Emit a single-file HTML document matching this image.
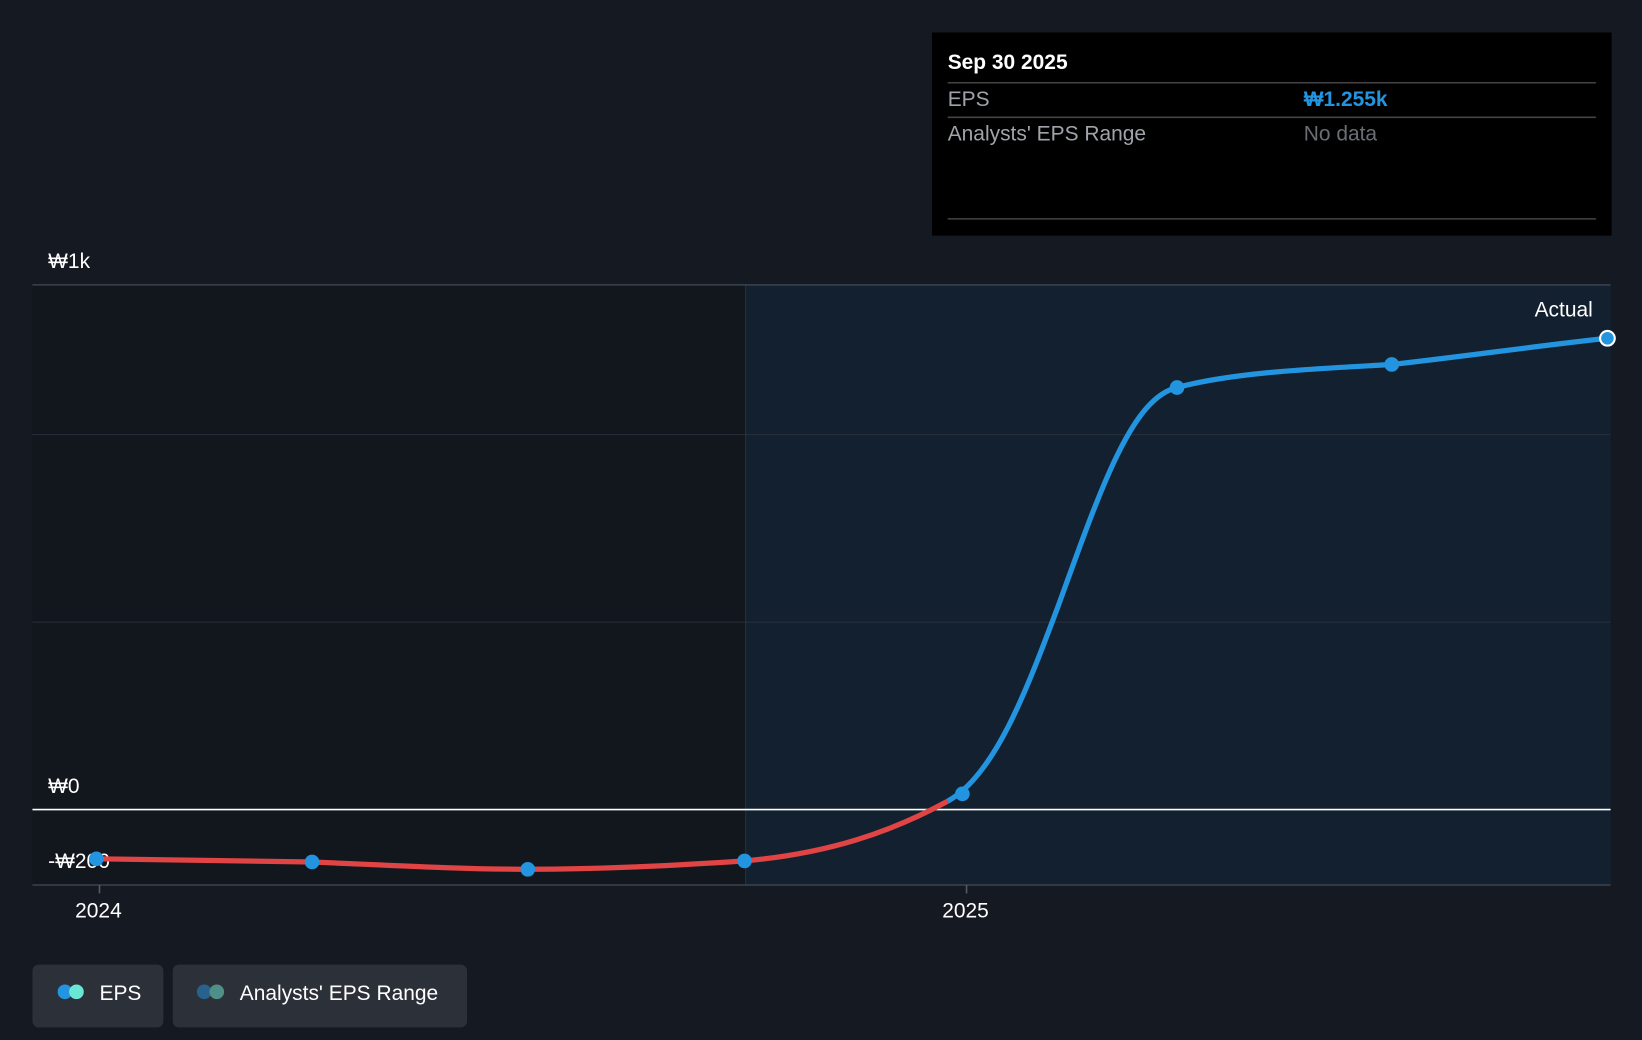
<!DOCTYPE html>
<html><head><meta charset="utf-8"><style>
html,body{margin:0;padding:0;background:#151b23;}
svg{display:block;}
text{font-family:"Liberation Sans",sans-serif;}
</style></head><body>
<svg width="1642" height="1040" viewBox="0 0 1568 993" preserveAspectRatio="none" xmlns="http://www.w3.org/2000/svg">
<rect width="1568" height="993" fill="#151a22"/>
<rect x="31" y="272" width="681" height="573" fill="#12161d"/>
<rect x="712" y="272" width="826" height="573" fill="#13202f"/>
<line x1="712" y1="272" x2="712" y2="845" stroke="#233140" stroke-width="1"/>
<line x1="31" y1="272" x2="1538" y2="272" stroke="#3a4250" stroke-width="1.5"/>
<line x1="31" y1="415" x2="1538" y2="415" stroke="#2a313c" stroke-width="1"/>
<line x1="31" y1="594" x2="1538" y2="594" stroke="#2a313c" stroke-width="1"/>
<line x1="31" y1="773" x2="1538" y2="773" stroke="#ffffff" stroke-width="1.5"/>
<line x1="31" y1="845" x2="1538" y2="845" stroke="#3d434d" stroke-width="1.5"/>
<line x1="95" y1="845" x2="95" y2="853" stroke="#555b64" stroke-width="1.5"/>
<line x1="923" y1="845" x2="923" y2="853" stroke="#555b64" stroke-width="1.5"/>
<text x="46" y="256" fill="#fff" font-size="20">₩1k</text>
<text x="46" y="757" fill="#fff" font-size="20">₩0</text>
<text x="46" y="829" fill="#fff" font-size="20">-₩200</text>
<text x="94" y="876" fill="#fff" font-size="20" text-anchor="middle">2024</text>
<text x="922" y="876" fill="#fff" font-size="20" text-anchor="middle">2025</text>
<text x="1521" y="302" fill="#fff" font-size="20" text-anchor="end">Actual</text>
<path d="M92,820 C160,821 230,822 298,823 C370,826 440,830 504,830 C580,830 650,826 711,822 C790,815 850,795 905,765" stroke="#e04444" stroke-width="5" fill="none"/>
<path d="M905,765 C950,740 980,660 1010,580 C1050,470 1080,380 1124,370 C1180,355 1260,352 1329,348 C1400,340 1470,330 1535,323" stroke="#2394e0" stroke-width="5" fill="none"/>
<g fill="#2394e0">
<circle cx="92" cy="820" r="7"/><circle cx="298" cy="823" r="7"/><circle cx="504" cy="830" r="7"/><circle cx="711" cy="822" r="7"/><circle cx="919" cy="758" r="7"/><circle cx="1124" cy="370" r="7"/><circle cx="1329" cy="348" r="7"/>
</g>
<circle cx="1535" cy="323" r="7" fill="#2394e0" stroke="#fff" stroke-width="2"/>
<rect x="890" y="31" width="649" height="194" fill="#000"/>
<text x="905" y="66" fill="#fff" font-size="20" font-weight="bold">Sep 30 2025</text>
<line x1="905" y1="79" x2="1524" y2="79" stroke="#444" stroke-width="1.5"/>
<text x="905" y="101" fill="#a0a4aa" font-size="20">EPS</text>
<text x="1245" y="101" fill="#2394e0" font-size="20" font-weight="bold">₩1.255k</text>
<line x1="905" y1="112" x2="1524" y2="112" stroke="#444" stroke-width="1.5"/>
<text x="905" y="134" fill="#a0a4aa" font-size="20">Analysts' EPS Range</text>
<text x="1245" y="134" fill="#6a6e74" font-size="20">No data</text>
<line x1="905" y1="209" x2="1524" y2="209" stroke="#444" stroke-width="1.5"/>
<rect x="31" y="921" width="125" height="60" rx="6" fill="#2c3038"/>
<circle cx="62" cy="947" r="7" fill="#2394e0"/><circle cx="73" cy="947" r="7" fill="#6ce6d4"/>
<text x="95" y="955" fill="#fff" font-size="20">EPS</text>
<rect x="165" y="921" width="281" height="60" rx="6" fill="#2c3038"/>
<circle cx="195" cy="947" r="7" fill="#27628f"/><circle cx="207" cy="947" r="7" fill="#4e8f88"/>
<text x="229" y="955" fill="#fff" font-size="20">Analysts' EPS Range</text>
</svg>
</body></html>
